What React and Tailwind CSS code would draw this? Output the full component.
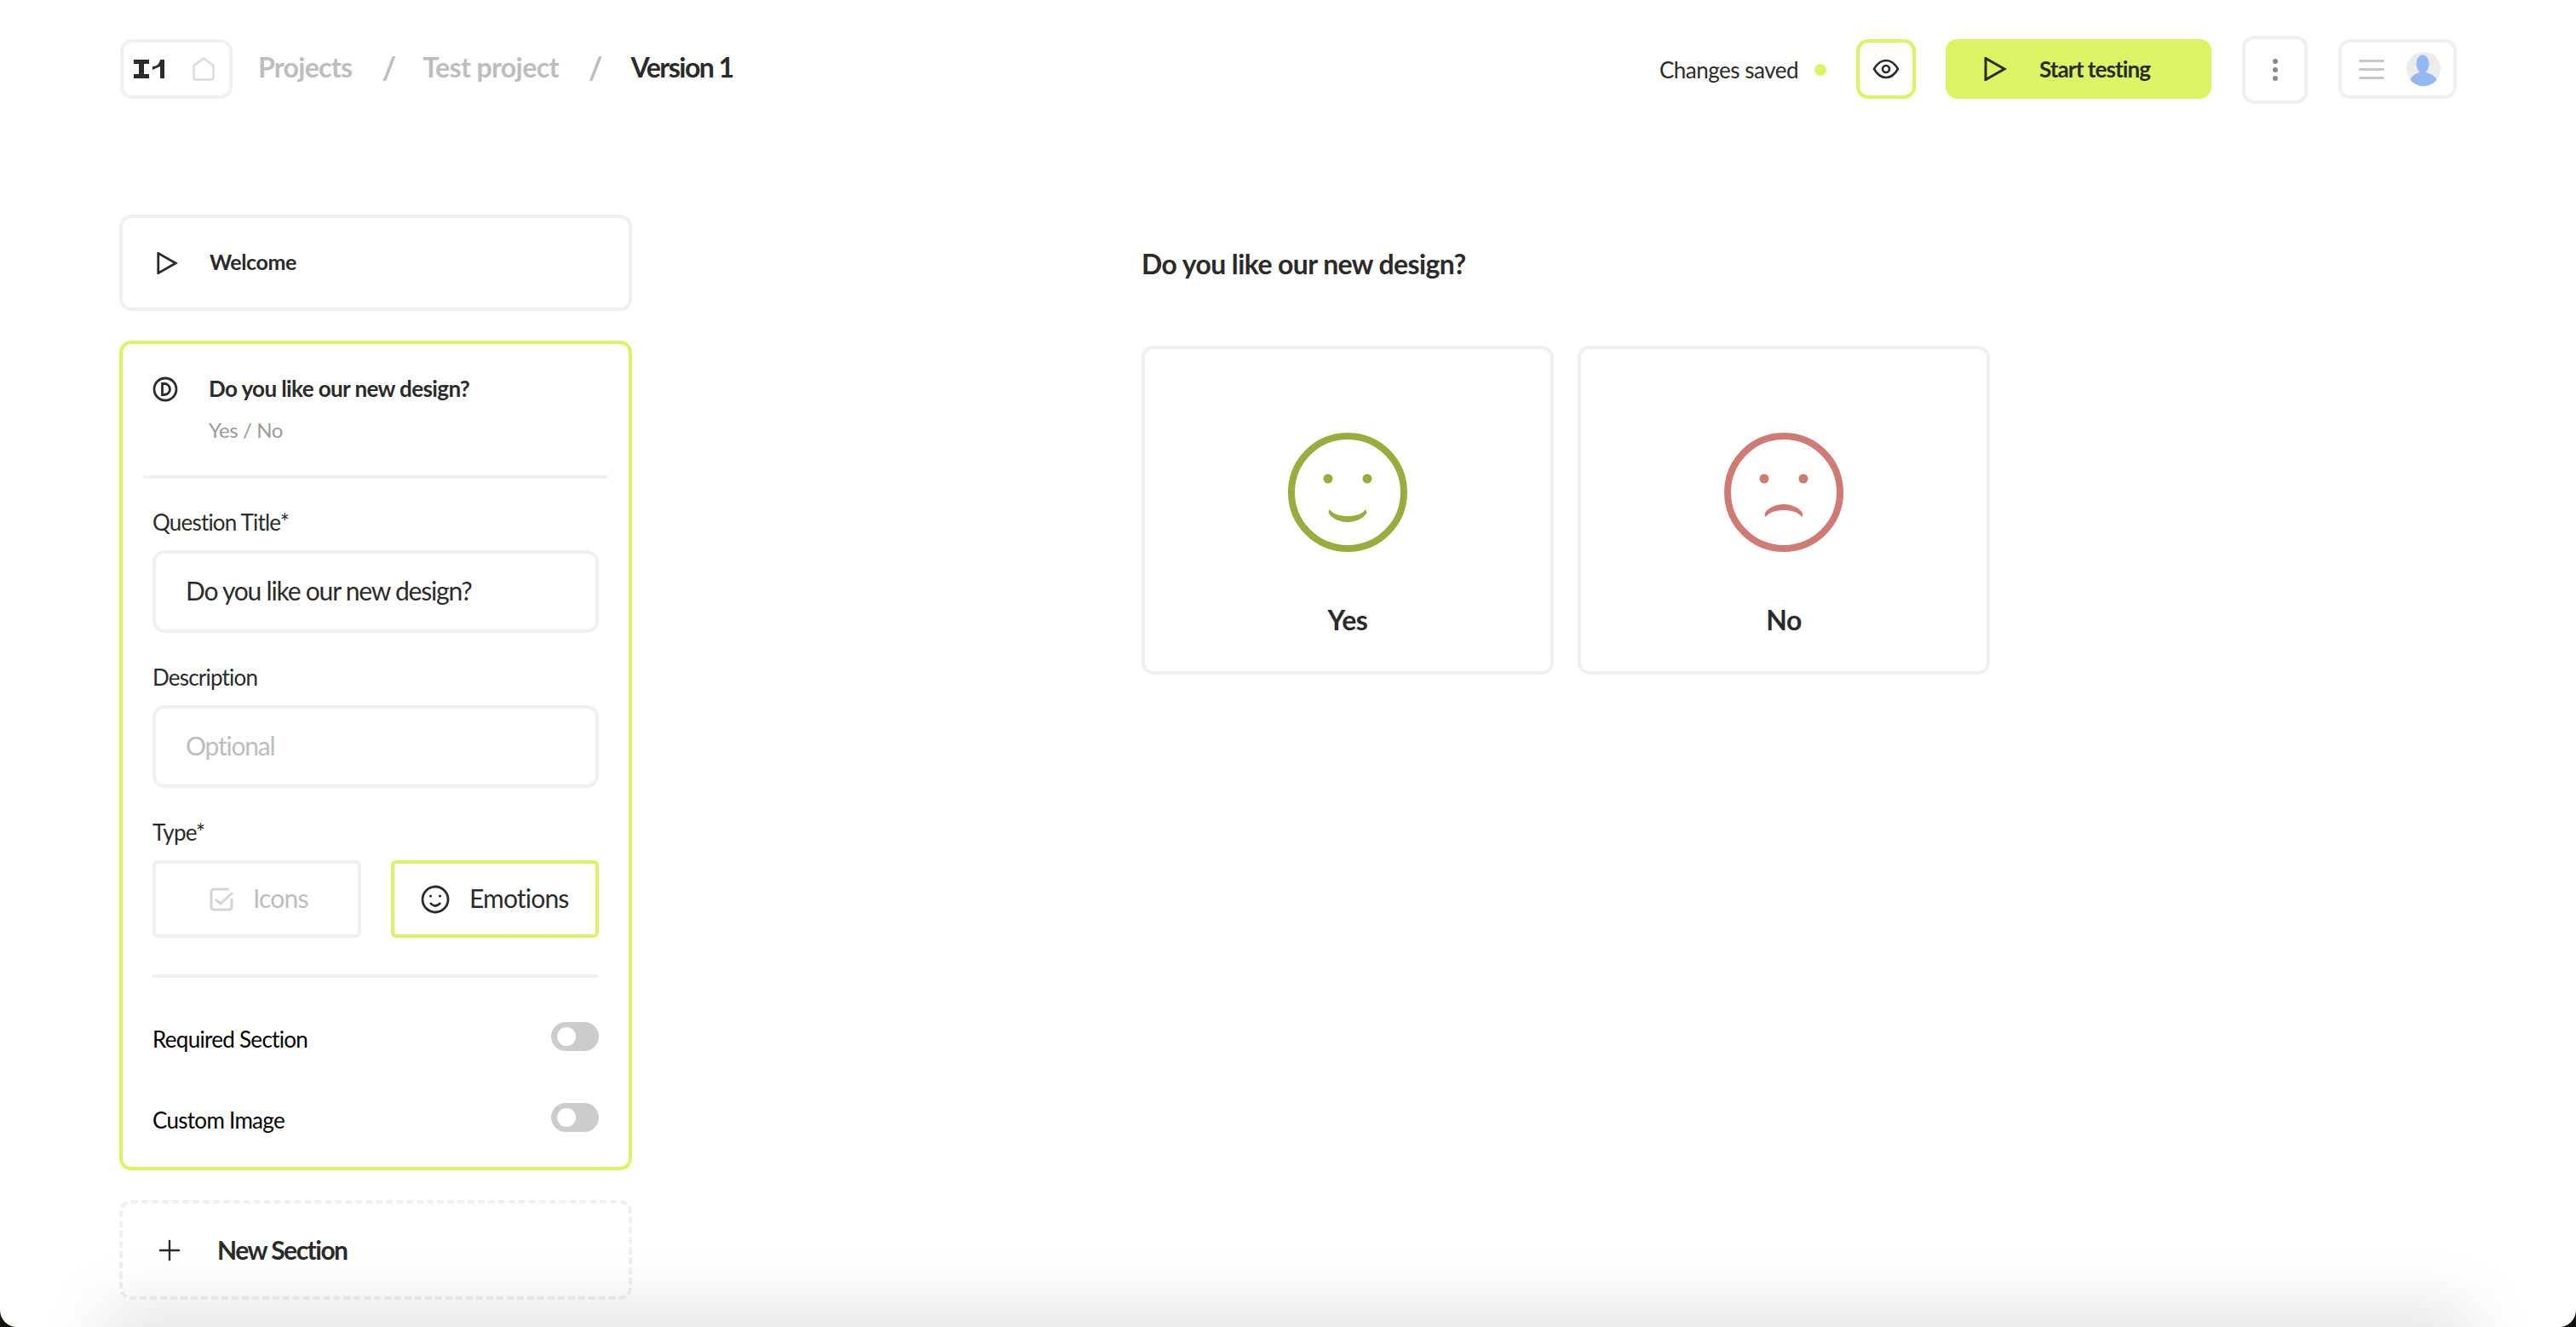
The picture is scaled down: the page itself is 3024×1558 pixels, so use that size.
import React from 'react';
import { Plus } from 'lucide-react';

const font = { fontFamily: 'Lato, sans-serif' };

const PlayIcon = ({ className }) => (
  <svg className={className} viewBox="0 0 28 28" fill="none" stroke="currentColor" strokeWidth={3} strokeLinejoin="miter">
    <path d="M3 1.5v25L25 14z" />
  </svg>
);

const Logo = () => (
  <svg width="36" height="22" viewBox="0 0 36 22" fill="#2b2b2b">
    <path d="M0 0h18v5h-6v12h6v5H0v-5h6V5H0z" />
    <path d="M31 0h5v22h-5V8l-9 4V8c5 0 8-3 9-8z" />
  </svg>
);

const HomeIcon = () => (
  <svg width="26" height="28" viewBox="0 0 26 28" fill="none" stroke="#dcdcdc" strokeWidth={2.6} strokeLinejoin="round">
    <path d="M1.5 10L13 1.5 24.5 10v14a2.5 2.5 0 0 1-2.5 2.5H4A2.5 2.5 0 0 1 1.5 24z" />
  </svg>
);

const Face = ({ color, sad }) => (
  <svg width="140" height="140" viewBox="0 0 140 140" fill="none" stroke={color}>
    <circle cx="70" cy="70" r="66" strokeWidth="8" />
    <circle cx="47" cy="54" r="5.5" fill={color} stroke="none" />
    <circle cx="93" cy="54" r="5.5" fill={color} stroke="none" />
    {sad ? (
      <path d="M48.5 99C53.5 93 61.5 91 70 91C78.5 91 86.5 93 91.5 99L92.5 95C88.5 88 79.5 84 70 84C60.5 84 51.5 88 47.5 95Z" fill={color} stroke="none" />
    ) : (
      <path d="M48.5 90C53.5 96 61.5 98 70 98C78.5 98 86.5 96 91.5 90L92.5 94C88.5 101 79.5 105 70 105C60.5 105 51.5 101 47.5 94Z" fill={color} stroke="none" />
    )}
  </svg>
);

const Toggle = () => (
  <div className="w-[56px] h-[34px] rounded-full bg-[#cccccc] flex items-center pl-[7px]">
    <div className="w-[22px] h-[22px] rounded-full bg-white" />
  </div>
);

const Field = ({ label, value, placeholder }) => (
  <div>
    <div className="text-[26px] leading-[34px] text-[#2b2b2b] tracking-[-0.8px]">{label}</div>
    <div className={`mt-[16px] h-[97px] border-4 border-[#f0f0f0] rounded-[14px] pl-[35px] pb-[3px] flex items-center text-[30px] tracking-[-1.2px] ${value ? 'text-[#2b2b2b]' : 'text-[#bdbdbd]'}`}>
      {value || placeholder}
    </div>
  </div>
);

export default function App() {
  return (
    <div className="w-[3024px] h-[1558px] bg-[#14140f]">
      <div className="relative w-full h-full bg-white overflow-hidden rounded-b-[20px]" style={font}>
        <header className="h-[163px] pt-[46px] pl-[141px] pr-[140px] flex items-start">
          <div className="w-[132px] h-[70px] border-4 border-[#f0f0f0] rounded-[14px] flex items-center pl-[12px] gap-[33px]">
            <Logo />
            <HomeIcon />
          </div>
          <nav className="h-[66px] ml-[30px] flex items-center text-[32px] font-bold text-[#bdbdbd]">
            <span className="tracking-[-0.7px]">Projects</span>
            <span className="ml-[35px] text-[36px]">/</span>
            <span className="ml-[31px] tracking-[-0.6px]">Test project</span>
            <span className="ml-[35px] text-[36px]">/</span>
            <span className="ml-[33px] text-[#2b2b2b] tracking-[-1.5px]">Version 1</span>
          </nav>
          <div className="ml-auto flex items-start">
            <div className="h-[72px] flex items-center text-[26px] text-[#2b2b2b] tracking-[-0.5px]">
              Changes saved
              <span className="ml-[19px] w-[14px] h-[14px] rounded-full bg-[#dcf365]" />
            </div>
            <div className="ml-[35px] w-[70px] h-[70px] border-4 border-[#dcf365] rounded-[14px] flex items-center justify-center text-[#2b2b2b]">
              <svg width="32" height="32" viewBox="0 0 32 32" fill="none" stroke="currentColor" strokeWidth="2.6">
                <path d="M2 16c4-7 9-10 14-10s10 3 14 10c-4 7-9 10-14 10S6 23 2 16z" />
                <circle cx="16" cy="16" r="4" />
              </svg>
            </div>
            <div className="ml-[35px] w-[312px] h-[70px] rounded-[14px] bg-[#dcf365] flex items-center pl-[44px] text-[26px] font-bold text-[#2b2b2b] tracking-[-0.9px]">
              <PlayIcon className="w-[28px] h-[28px]" />
              <span className="ml-[38px]">Start testing</span>
            </div>
            <div className="ml-[36px] -mt-[4px] w-[77px] h-[80px] border-4 border-[#f0f0f0] rounded-[14px] flex flex-col items-center justify-center gap-[4px]">
              <span className="w-[6px] h-[6px] rounded-full bg-[#8a8a8a]" />
              <span className="w-[6px] h-[6px] rounded-full bg-[#8a8a8a]" />
              <span className="w-[6px] h-[6px] rounded-full bg-[#8a8a8a]" />
            </div>
            <div className="ml-[36px] w-[139px] h-[70px] border-4 border-[#f0f0f0] rounded-[14px] flex items-center pl-[20px]">
              <div className="flex flex-col gap-[7px]">
                <span className="block w-[30px] h-[3px] rounded-full bg-[#c8c8c8]" />
                <span className="block w-[30px] h-[3px] rounded-full bg-[#c8c8c8]" />
                <span className="block w-[30px] h-[3px] rounded-full bg-[#c8c8c8]" />
              </div>
              <div className="ml-[26px] w-[40px] h-[40px] rounded-full bg-[#ececec] overflow-hidden">
                <svg width="40" height="40" viewBox="0 0 40 40" fill="#93b8f2">
                  <ellipse cx="19" cy="14" rx="7.5" ry="10.5" />
                  <path d="M15 20h8v4c7 2 12 5 13 10v6H4v-6c1-5 5-8 11-10z" />
                </svg>
              </div>
            </div>
          </div>
        </header>

        <main className="flex items-start pt-[89px] pl-[140px]">
          <aside className="w-[602px] flex flex-col gap-[35px]">
            <div className="h-[113px] border-4 border-[#f0f0f0] rounded-[14px] flex items-center pl-[39px] text-[#2b2b2b]">
              <PlayIcon className="w-[26px] h-[26px]" />
              <span className="ml-[37px] pb-[2px] text-[25px] font-bold tracking-[-0.4px]">Welcome</span>
            </div>

            <div className="h-[974px] border-4 border-[#dcf365] rounded-[14px] px-[25px] pt-[34px] text-[#2b2b2b]">
              <div className="flex items-start pl-[10px] h-[120px]">
                <svg className="mt-[4px]" width="30" height="30" viewBox="0 0 30 30" fill="none" stroke="currentColor" strokeWidth="2.8">
                  <circle cx="15" cy="15" r="13" />
                  <path d="M11.5 8.5h2.5a6.5 6.5 0 0 1 0 13h-2.5z" />
                </svg>
                <div className="ml-[36px]">
                  <div className="text-[26px] leading-[36px] font-bold tracking-[-0.6px]">Do you like our new design?</div>
                  <div className="mt-[14px] text-[24px] leading-[34px] text-[#9a9a9a] tracking-[-0.4px]">Yes / No</div>
                </div>
              </div>
              <div className="h-[4px] bg-[#f0f0f0]" />
              <div className="px-[10px] pt-[34px]">
                <Field label="Question Title*" value="Do you like our new design?" />
                <div className="h-[35px]" />
                <Field label="Description" placeholder="Optional" />
                <div className="mt-[35px] text-[26px] leading-[34px] tracking-[-0.8px]">Type*</div>
                <div className="mt-[16px] grid grid-cols-2 gap-[35px] text-[30px] tracking-[-0.8px]">
                  <div className="h-[91px] border-4 border-[#f0f0f0] rounded-[6px] flex items-center justify-center gap-[22px] pl-[4px] text-[#bdbdbd]">
                    <svg width="30" height="30" viewBox="0 0 30 30" fill="none" stroke="#d4d4d4" strokeWidth="3" strokeLinejoin="round">
                      <path d="M24 3H6a3 3 0 0 0-3 3v18a3 3 0 0 0 3 3h18a3 3 0 0 0 3-3V14" />
                      <path d="M8 15l6 5 14-13" />
                    </svg>
                    <span className="pb-[2px]">Icons</span>
                  </div>
                  <div className="h-[91px] border-4 border-[#dcf365] rounded-[6px] flex items-center justify-center gap-[23px]">
                    <svg width="34" height="34" viewBox="0 0 34 34" fill="none" stroke="currentColor" strokeWidth="2.8">
                      <circle cx="17" cy="17" r="15" />
                      <circle cx="11.5" cy="13" r="1.6" fill="currentColor" stroke="none" />
                      <circle cx="22.5" cy="13" r="1.6" fill="currentColor" stroke="none" />
                      <path d="M11 21c2 2.5 4 3.5 6 3.5s4-1 6-3.5" />
                    </svg>
                    <span className="pb-[2px]">Emotions</span>
                  </div>
                </div>
                <div className="mt-[43px] h-[4px] bg-[#f0f0f0]" />
                <div className="mt-[52px] flex justify-between text-[26px] text-black h-[34px] tracking-[-0.7px]">
                  <span className="pt-[1px]">Required Section</span>
                  <Toggle />
                </div>
                <div className="mt-[61px] flex justify-between text-[26px] text-black h-[34px] tracking-[-0.7px]">
                  <span className="pt-[1px]">Custom Image</span>
                  <Toggle />
                </div>
              </div>
            </div>

            <div className="h-[117px] border-4 border-dashed border-[#f0f0f0] rounded-[14px] flex items-center pl-[36px] text-[#2b2b2b]">
              <Plus size={38} strokeWidth={1.5} />
              <span className="ml-[37px] text-[30px] font-bold tracking-[-1.5px]">New Section</span>
            </div>
          </aside>

          <section className="ml-[598px] text-[#2b2b2b]">
            <h2 className="mt-[36px] text-[32px] leading-[44px] font-bold tracking-[-0.6px]">Do you like our new design?</h2>
            <div className="mt-[74px] flex gap-[28px]">
              <div className="w-[484px] h-[386px] border-4 border-[#f0f0f0] rounded-[14px] flex flex-col items-center pt-[98px]">
                <Face color="#9bab3c" />
                <div className="mt-[56px] text-[32px] font-bold tracking-[-0.5px]">Yes</div>
              </div>
              <div className="w-[484px] h-[386px] border-4 border-[#f0f0f0] rounded-[14px] flex flex-col items-center pt-[98px]">
                <Face color="#d07a74" sad />
                <div className="mt-[56px] text-[32px] font-bold tracking-[-0.5px]">No</div>
              </div>
            </div>
          </section>
        </main>

        {/* shadow of the next window, just under the fold */}
        <div className="absolute left-[140px] right-[140px] -bottom-[40px] h-[40px] shadow-[0_0_80px_20px_rgba(0,0,0,0.12)]" />
      </div>
    </div>
  );
}
